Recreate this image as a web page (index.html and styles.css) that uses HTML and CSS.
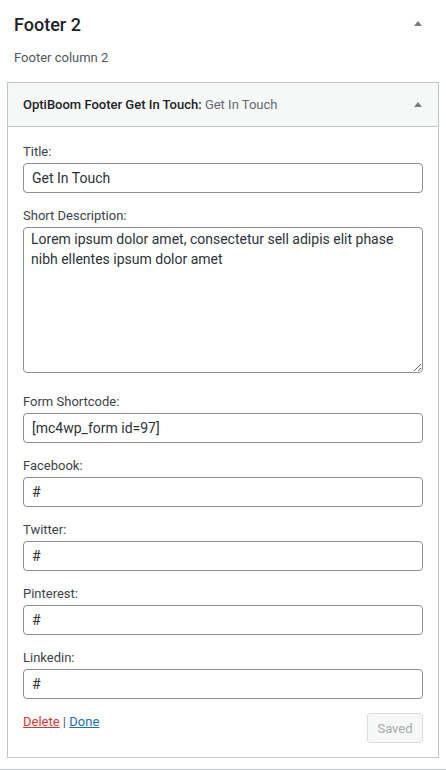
FILE: index.html
```html
<!DOCTYPE html>
<html lang="en">
<head>
<meta charset="utf-8">
<title>Footer 2</title>
<link rel="stylesheet" href="styles.css">
</head>
<body>
<div class="sidebar">
  <div class="sidebar-head">
    <h2 class="sidebar-title">Footer 2</h2>
    <span class="arrow"></span>
  </div>
  <p class="sidebar-desc">Footer column 2</p>

  <div class="widget">
    <div class="widget-top">
      <h3 class="widget-title">OptiBoom Footer Get In Touch<span class="colon">:</span> <span class="in-title">Get In Touch</span></h3>
      <span class="arrow"></span>
    </div>
    <div class="widget-inside">
      <div class="field">
        <label class="label" for="f-title">Title:</label>
        <input class="input" id="f-title" type="text" value="Get In Touch">
      </div>
      <div class="field field-area">
        <label class="label" for="f-desc">Short Description:</label>
        <textarea class="textarea" id="f-desc">Lorem ipsum dolor amet, consectetur sell adipis elit phase nibh ellentes ipsum dolor amet</textarea>
      </div>
      <div class="field">
        <label class="label" for="f-code">Form Shortcode:</label>
        <input class="input" id="f-code" type="text" value="[mc4wp_form id=97]">
      </div>
      <div class="field">
        <label class="label" for="f-fb">Facebook:</label>
        <input class="input" id="f-fb" type="text" value="#">
      </div>
      <div class="field">
        <label class="label" for="f-tw">Twitter:</label>
        <input class="input" id="f-tw" type="text" value="#">
      </div>
      <div class="field">
        <label class="label" for="f-pi">Pinterest:</label>
        <input class="input" id="f-pi" type="text" value="#">
      </div>
      <div class="field">
        <label class="label" for="f-li">Linkedin:</label>
        <input class="input" id="f-li" type="text" value="#">
      </div>
      <div class="actions">
        <div class="links"><a class="link-delete" href="#">Delete</a> | <a class="link-done" href="#">Done</a></div>
        <button class="btn-saved" type="button" disabled>Saved</button>
      </div>
    </div>
  </div>
</div>
</body>
</html>
```
FILE: styles.css
```css
* { box-sizing: border-box; }

html, body {
  margin: 0;
  padding: 0;
  background: #fff;
}

body {
  font-family: Roboto, "Noto Sans", sans-serif;
  font-size: 13px;
  line-height: 20px;
  color: #3c434a;
}

.sidebar {
  width: 446px;
  height: 770px;
  padding: 0 7px;
  border-bottom: 1px solid #c3c4c7;
}

.sidebar-head {
  display: flex;
  align-items: center;
  justify-content: space-between;
  padding: 13px 17px 0 7px;
}

.sidebar-title {
  margin: 0;
  font-size: 18px;
  line-height: 24px;
  font-weight: 500;
  color: #1d2327;
}

.arrow {
  width: 0;
  height: 0;
  border-left: 4px solid transparent;
  border-right: 4px solid transparent;
  border-bottom: 5px solid #787c82;
}

.sidebar-head .arrow {
  margin-top: -4px;
}

.sidebar-desc {
  margin: 11px 0 14px 7px;
  color: #50575e;
}

.widget {
  border: 1px solid #c3c4c7;
  background: #fff;
}

.widget-top {
  height: 44px;
  display: flex;
  align-items: center;
  justify-content: space-between;
  padding: 0 16px 0 15px;
  background: #f6f7f7;
  border-bottom: 1px solid #c3c4c7;
}

.widget-title {
  margin: 0;
  font-size: 13px;
  font-weight: 500;
  color: #1d2327;
}

.in-title {
  font-weight: 400;
  color: #646970;
}

.widget-inside {
  padding: 15px 15px 14px 15px;
}

.field {
  margin-bottom: 13px;
}

.field-area {
  margin-bottom: 19px;
}

.label {
  display: block;
  line-height: 20px;
  margin-bottom: 1px;
  color: #3c434a;
}

.input,
.textarea {
  display: block;
  width: 400px;
  margin: 0;
  border: 1px solid #8c8f94;
  border-radius: 4px;
  background: #fff;
  color: #2c3338;
  font-family: Roboto, "Noto Sans", sans-serif;
  font-size: 14px;
}

.input {
  height: 30px;
  padding: 0 8px;
  line-height: 28px;
}

.textarea {
  height: 146px;
  padding: 2px 7px;
  line-height: 19.5px;
}

.actions {
  display: flex;
  justify-content: space-between;
  align-items: flex-start;
  margin-top: 1px;
}

.links {
  line-height: 20px;
  color: #50575e;
}

.link-delete {
  color: #d63638;
  text-decoration: underline;
}

.link-done {
  color: #2271b1;
  text-decoration: underline;
}

.btn-saved {
  margin-top: 1px;
  width: 56px;
  height: 30px;
  padding: 0;
  border: 1px solid #dcdcde;
  border-radius: 3px;
  background: #f6f7f7;
  color: #a7aaad;
  font-family: Roboto, "Noto Sans", sans-serif;
  font-size: 13px;
}
```
